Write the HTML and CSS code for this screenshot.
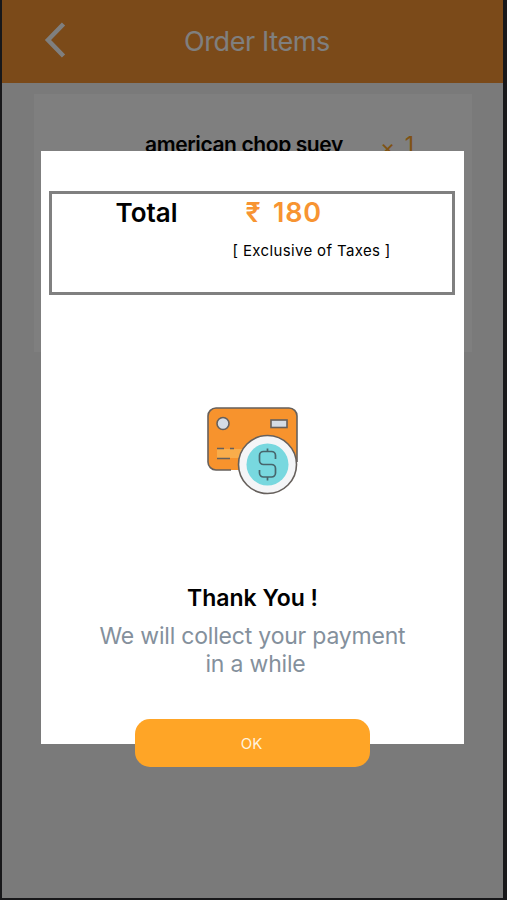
FILE: index.html
```
<!DOCTYPE html>
<html>
<head>
  <meta charset="UTF-8">
  <title>Order Items</title>
  <link rel="stylesheet" href="styles.css">
</head>
<body>
<div class="screen">
  <div class="header">
    <svg class="back" width="22" height="38" viewBox="0 0 22 38">
      <path d="M19.500 3L4 19L19.500 35" />
    </svg>
    <h1 class="title">Order Items</h1>
  </div>
  <div class="item-card">
    <span class="item-name">american chop suey</span>
    <span class="item-count"><span class="times">×</span> 1</span>
  </div>

  <div class="overlay">
    <div class="modal">
      <div class="total">
        <div class="total-label">Total</div>
        <div>
          <div class="price">₹ 180</div>
          <div class="taxes">[ Exclusive of Taxes ]</div>
        </div>
      </div>

      <svg class="card-icon" width="94" height="90" viewBox="0 0 94 90">
        <rect x="2" y="2" width="89" height="62" rx="8" fill="#f7932d" />
        <path d="M25 64H10a8 8 0 0 1-8-8V10a8 8 0 0 1 8-8h73a8 8 0 0 1 8 8v46" fill="none" stroke="#66605c" stroke-width="1.6" />
        <circle cx="17" cy="17.500" r="6" fill="#d5dce5" stroke="#66605c" stroke-width="1.600" />
        <rect x="65" y="14" width="16" height="7.500" fill="#d5dce5" stroke="#66605c" stroke-width="1.600" />
        <rect x="11" y="43" width="26" height="9" fill="#f9ad4b" />
        <path d="M11 42.500h7M24 42.500h4M11 52.500h13" stroke="#66605c" stroke-width="1.600" />
        <circle cx="61.500" cy="58.500" r="29" fill="#f4f5f7" stroke="#66605c" stroke-width="1.600" />
        <circle cx="61.500" cy="58.500" r="21" fill="#78d8df" />
        <path d="M69.500 53v-3.500a4 4 0 0 0-4-4h-8a4 4 0 0 0-4 4v5a4 4 0 0 0 4 4h8a4 4 0 0 1 4 4v4.500a4 4 0 0 1-4 4h-8a4 4 0 0 1-4-4V64M61.500 42.500v3M61.500 71v3.500" fill="none" stroke="#47656c" stroke-width="1.700" />
      </svg>

      <h2 class="thanks">Thank You !</h2>
      <p class="message">We will collect your payment<br><span class="message-end">in a while</span></p>
      <button class="ok-btn" type="button">OK</button>
    </div>
  </div>
</div>
</body>
</html>
```
FILE: styles.css
```
* {
  box-sizing: border-box;
}
body {
  margin: 0;
  background: #18181a;
  font-family: Inter, "Liberation Sans", sans-serif;
}
.screen {
  position: relative;
  width: 501px;
  height: 898px;
  margin-left: 2px;
  background: #f5f5f5;
  overflow: hidden;
}
.header {
  display: flex;
  align-items: center;
  height: 83px;
  padding-left: 42px;
  background: #f79432;
}
.back {
  margin-top: -3px;
  fill: none;
  stroke: #fff;
  stroke-width: 4.5;
}
.title {
  width: 147px;
  margin: 0 0 0 118px;
  color: #fff;
  font-size: 27px;
  font-weight: 400;
  line-height: 34px;
  letter-spacing: -0.4px;
  white-space: nowrap;
}
.item-card {
  display: flex;
  width: 438px;
  height: 258px;
  margin: 11px 0 0 32px;
  padding: 37px 0 0 111px;
  background: #fff;
}
.item-name {
  width: 235px;
  font-size: 21px;
  font-weight: 600;
  line-height: 28px;
  letter-spacing: -0.4px;
  white-space: nowrap;
}
.item-count {
  color: #ffa526;
  font-size: 23px;
  line-height: 28px;
  word-spacing: 3px;
}
.times {
  display: inline-block;
  transform: translateY(3px);
}

/* payment popup */
.overlay {
  position: absolute;
  inset: 0;
  background: rgba(0, 0, 0, 0.5);
}
.modal {
  display: flex;
  flex-direction: column;
  align-items: center;
  width: 423px;
  height: 593px;
  margin: 151px 0 0 39px;
  padding-top: 40px;
  background: #fff;
}
.modal > * {
  flex: none;
}
.total {
  display: flex;
  width: 406px;
  height: 104px;
  margin-right: 2px;
  padding: 3px 0 0 64px;
  border: 3px solid #808080;
}
.total-label {
  width: 117px;
  font-size: 26px;
  font-weight: 600;
  line-height: 32px;
}
.price {
  padding-left: 13px;
  color: #f79432;
  font-size: 27px;
  font-weight: 600;
  line-height: 32px;
  letter-spacing: 0.8px;
  word-spacing: 4px;
}
.taxes {
  margin-top: 12px;
  font-size: 15px;
  line-height: 20px;
  letter-spacing: 0.36px;
  white-space: nowrap;
}
.card-icon {
  margin-top: 111px;
}
.thanks {
  margin: 88px 0 0;
  font-size: 23px;
  font-weight: 600;
  line-height: 28px;
}
.message {
  margin: 10px 0 0;
  color: #84909c;
  font-size: 23px;
  line-height: 28px;
  letter-spacing: -0.2px;
  text-align: center;
  white-space: nowrap;
}
.message-end {
  padding-left: 6px;
}
.ok-btn {
  width: 235px;
  height: 48px;
  margin-top: 41px;
  padding: 0 2px 0 0;
  border: 0;
  border-radius: 15px;
  background: #ffa526;
  color: #fff3df;
  font-family: inherit;
  font-size: 15px;
}
```
